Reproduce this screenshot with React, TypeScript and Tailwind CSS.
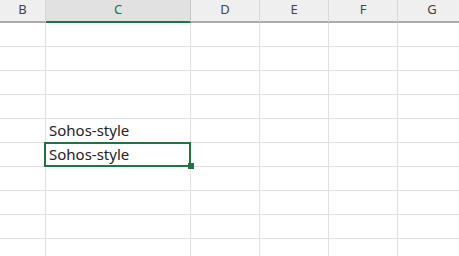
import React from "react";

const cols = [
  { name: "B", w: 46 },
  { name: "C", w: 145, sel: true },
  { name: "D", w: 69 },
  { name: "E", w: 69 },
  { name: "F", w: 69 },
  { name: "G", w: 69 },
];

const rows = Array.from({ length: 10 }, (_, i) => i);

export default function App() {
  return (
    <div
      className="relative w-[459px] h-[256px] overflow-hidden bg-white"
      style={{ fontFamily: '"Noto Sans", "Liberation Sans", sans-serif' }}
    >
      <div className="flex h-[23px]">
        {cols.map((c) => (
          <div
            key={c.name}
            style={{ width: c.w }}
            className={
              "shrink-0 flex items-center justify-center border-r border-b-2 text-[13px] pb-[2px] " +
              (c.sel
                ? "bg-[#e1e1e1] border-b-[#217346] border-r-[#c6c6c6] text-[#217346]"
                : "bg-[#efefef] border-b-[#ababab] border-r-[#d8d8d8] text-[#444444]")
            }
          >
            {c.name}
          </div>
        ))}
      </div>
      {rows.map((r) => (
        <div key={r} className="flex h-[24px]">
          {cols.map((c) => (
            <div
              key={c.name}
              style={{ width: c.w }}
              className="shrink-0 border-r border-b border-[#e1e1e1] flex items-center pl-[3px] text-[15px] text-[#222222]"
            >
              {c.name === "C" && (r === 4 || r === 5) ? "Sohos-style" : ""}
            </div>
          ))}
        </div>
      ))}
      <div className="absolute left-[44px] top-[142px] w-[147px] h-[25px] border-2 border-[#217346]" />
      <div className="absolute left-[188px] top-[163px] w-[6px] h-[6px] bg-[#217346]" />
    </div>
  );
}
